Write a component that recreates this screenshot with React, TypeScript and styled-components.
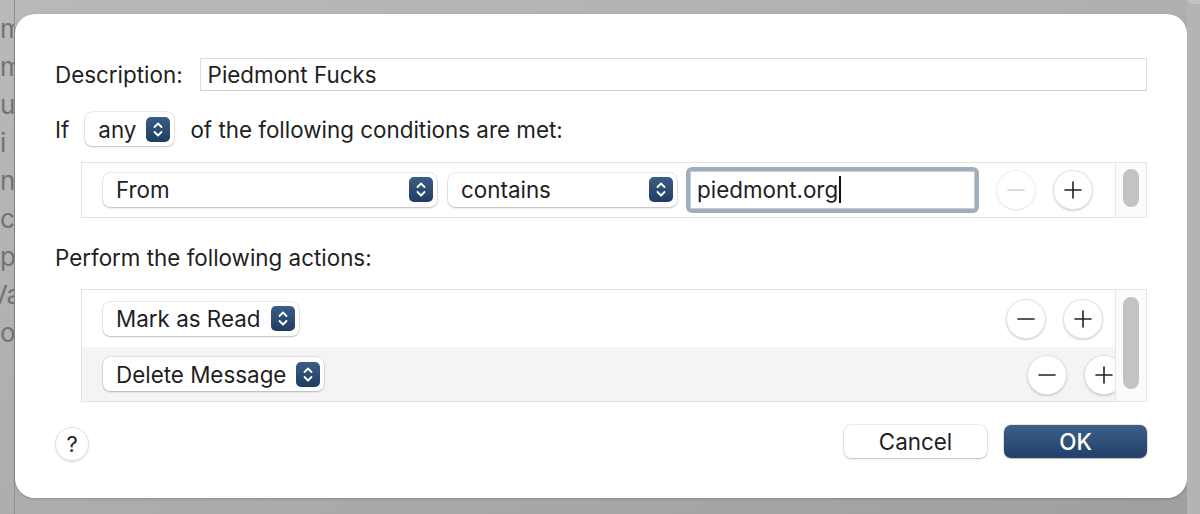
import React from 'react'
import styled, { createGlobalStyle } from 'styled-components'

const GlobalStyle = createGlobalStyle`
  html, body {
    margin: 0;
    padding: 0;
    overflow: hidden;
  }
  body {
    font-family: Inter, "Noto Sans", "Liberation Sans", sans-serif;
    color: #1f1f1f;
  }
`

const FONT = '22.4px'

const Screen = styled.div`
  display: flex;
  height: 514px;
  width: 1200px;
  background: linear-gradient(160deg, #b9b9b9 0%, #adadad 55%, #9f9f9f 100%);
  overflow: hidden;
`

const BackList = styled.div`
  width: 14px;
  flex: none;
  overflow: hidden;
  padding-top: 14px;
  display: flex;
  flex-direction: column;
  border-right: 1px solid #8f8f8f;
`

const BackWord = styled.span<{ $shift?: number }>`
  display: block;
  height: 38px;
  line-height: 30px;
  font-size: 26px;
  color: #737373;
  white-space: nowrap;
  margin-left: ${p => p.$shift ?? 0}px;
`

const Sheet = styled.div`
  margin-top: 14px;
  width: 1172px;
  height: 484px;
  flex: none;
  box-sizing: border-box;
  background: #ffffff;
  border-radius: 20px;
  box-shadow: 0 1px 3px rgba(0, 0, 0, 0.18);
  padding: 44px 40px 40px 40px;
  display: flex;
  flex-direction: column;
`

const RightStrip = styled.div`
  flex: 1;
  background: #b4b4b4;
  display: flex;
  justify-content: flex-end;
`

const CornerTab = styled.div`
  width: 34px;
  height: 6px;
  margin-top: -2px;
  border-radius: 0 0 0 14px;
  background: #c4c4c4;
`

const Row = styled.div<{ $top?: number }>`
  display: flex;
  align-items: center;
  margin-top: ${p => p.$top ?? 0}px;
`

const Label = styled.span<{ $gap?: number; $lead?: number }>`
  font-size: ${FONT};
  white-space: nowrap;
  margin-left: ${p => p.$lead ?? 0}px;
  margin-right: ${p => p.$gap ?? 0}px;
`

const TextField = styled.div`
  flex: 1;
  height: 33px;
  box-sizing: border-box;
  border: 1px solid #dddddd;
  border-bottom-color: #cfcfcf;
  display: flex;
  align-items: center;
  padding-left: 7px;
  font-size: ${FONT};
`

const Popup = styled.div<{ $width?: number; $lead?: number }>`
  display: flex;
  align-items: center;
  height: 34px;
  box-sizing: border-box;
  ${p => (p.$width ? `width: ${p.$width}px;` : '')}
  margin-left: ${p => p.$lead ?? 0}px;
  padding: 0 4px 0 13px;
  gap: 10px;
  background: #ffffff;
  border-radius: 7px;
  box-shadow: 0 0 0 0.5px rgba(0, 0, 0, 0.14), 0 1px 2px rgba(0, 0, 0, 0.2);
  font-size: ${FONT};
  flex: none;
`

const PopupText = styled.span`
  flex: 1;
  white-space: nowrap;
`

const StepperBox = styled.span`
  width: 24px;
  height: 25px;
  border-radius: 5px;
  background: linear-gradient(#3b5d86, #1f3d62);
  display: flex;
  align-items: center;
  justify-content: center;
  flex: none;
`

const Stepper = () => (
  <StepperBox>
    <svg width="12" height="17" viewBox="0 0 12 17">
      <path d="M2.5 6 L6 2.5 L9.5 6" fill="none" stroke="#fff" strokeWidth="1.8" strokeLinecap="round" strokeLinejoin="round" />
      <path d="M2.5 11 L6 14.5 L9.5 11" fill="none" stroke="#fff" strokeWidth="1.8" strokeLinecap="round" strokeLinejoin="round" />
    </svg>
  </StepperBox>
)

const ListBox = styled.div<{ $top: number }>`
  display: flex;
  margin: ${p => p.$top}px 0 0 26px;
  border: 1px solid #e3e3e3;
  overflow: hidden;
`

const Rows = styled.div`
  flex: 1;
  display: flex;
  flex-direction: column;
  overflow: hidden;
`

const RuleRow = styled.div<{ $height: number; $alt?: boolean }>`
  display: flex;
  align-items: center;
  height: ${p => p.$height}px;
  padding: 0 12px 0 21px;
  background: ${p => (p.$alt ? '#f4f4f4' : '#ffffff')};
`

const Spacer = styled.div`
  flex: 1;
`

const CircleGroup = styled.div<{ $shift?: number; $down?: number }>`
  display: flex;
  gap: 17px;
  margin-right: ${p => -(p.$shift ?? 0)}px;
  margin-top: ${p => p.$down ?? 0}px;
  flex: none;
`

const Circle = styled.div<{ $disabled?: boolean }>`
  width: 40px;
  height: 40px;
  border-radius: 50%;
  background: #ffffff;
  box-sizing: border-box;
  border: 1px solid ${p => (p.$disabled ? '#ededed' : '#e2e2e2')};
  box-shadow: ${p => (p.$disabled ? '0 1px 1px rgba(0,0,0,0.05)' : '0 1px 2px rgba(0,0,0,0.18)')};
  display: flex;
  align-items: center;
  justify-content: center;
  flex: none;
`

const Glyph = ({ plus, disabled }: { plus?: boolean; disabled?: boolean }) => (
  <svg width="20" height="20" viewBox="0 0 20 20">
    <path d="M2 10 H18" stroke={disabled ? '#d2d2d2' : '#222'} strokeWidth="1.6" strokeLinecap="round" />
    {plus && <path d="M10 2 V18" stroke="#222" strokeWidth="1.6" strokeLinecap="round" />}
  </svg>
)

const ScrollTrack = styled.div<{ $top: number; $bottom: number }>`
  width: 31px;
  flex: none;
  box-sizing: border-box;
  border-left: 1px solid #e6e6e6;
  background: #fbfbfb;
  padding: ${p => p.$top}px 7px ${p => p.$bottom}px 7px;
  display: flex;
`

const Thumb = styled.div`
  flex: 1;
  background: #c3c3c3;
  border-radius: 8px;
`

const FocusField = styled.div`
  width: 293px;
  height: 46px;
  box-sizing: border-box;
  border: 4px solid #9eaebf;
  border-radius: 6px;
  background: #ffffff;
  box-shadow: inset 0 0 0 1px #c4ccd4;
  display: flex;
  align-items: center;
  padding-left: 7px;
  font-size: ${FONT};
  margin-left: 9px;
  flex: none;
`

const Caret = styled.span`
  display: inline-block;
  width: 2px;
  height: 27px;
  background: #111;
  margin-left: 1px;
`

const Footer = styled.div`
  display: flex;
  align-items: center;
  margin-top: 23px;
  height: 33px;
`

const HelpButton = styled.div`
  width: 34px;
  height: 34px;
  border-radius: 50%;
  box-sizing: border-box;
  border: 1px solid #e0e0e0;
  box-shadow: 0 1px 2px rgba(0, 0, 0, 0.16);
  display: flex;
  align-items: center;
  justify-content: center;
  font-size: 22px;
  margin-top: 4px;
`

const PushButton = styled.div<{ $primary?: boolean }>`
  width: 143px;
  height: 33px;
  border-radius: 7px;
  display: flex;
  align-items: center;
  justify-content: center;
  font-size: ${FONT};
  font-weight: ${p => (p.$primary ? 500 : 400)};
  color: ${p => (p.$primary ? '#ffffff' : '#1f1f1f')};
  background: ${p => (p.$primary ? 'linear-gradient(#3d5e86, #22416a)' : '#ffffff')};
  box-shadow: ${p =>
    p.$primary
      ? '0 0 0 0.5px rgba(0,0,0,0.2), 0 1px 1.5px rgba(0,0,0,0.2)'
      : '0 0 0 0.5px rgba(0,0,0,0.14), 0 1px 2px rgba(0,0,0,0.2)'};
  & + & {
    margin-left: 17px;
  }
`

const backWords: [string, number][] = [
  ['m', 0], ['m', 0], ['u', 0], ['i', 0], ['n', 0], ['c', 0], ['p', 0], ['Va', -10], ['o', 0],
]

export default function App() {
  return (
    <>
      <GlobalStyle />
      <Screen>
        <BackList>
          {backWords.map(([w, s], i) => (
            <BackWord key={i} $shift={s}>{w}</BackWord>
          ))}
        </BackList>
        <Sheet>
          <Row>
            <Label $gap={17}>Description:</Label>
            <TextField>Piedmont Fucks</TextField>
          </Row>

          <Row $top={21}>
            <Label $gap={16}>If</Label>
            <Popup>
              <PopupText>any</PopupText>
              <Stepper />
            </Popup>
            <Label $lead={16}>of the following conditions are met:</Label>
          </Row>

          <ListBox $top={16}>
            <Rows>
              <RuleRow $height={54}>
                <Popup $width={334}>
                  <PopupText>From</PopupText>
                  <Stepper />
                </Popup>
                <Popup $width={229} $lead={11}>
                  <PopupText>contains</PopupText>
                  <Stepper />
                </Popup>
                <FocusField>
                  piedmont.org<Caret />
                </FocusField>
                <Spacer />
                <CircleGroup $shift={-10}>
                  <Circle $disabled><Glyph disabled /></Circle>
                  <Circle><Glyph plus /></Circle>
                </CircleGroup>
              </RuleRow>
            </Rows>
            <ScrollTrack $top={6} $bottom={10}>
              <Thumb />
            </ScrollTrack>
          </ListBox>

          <Row $top={26}>
            <Label>Perform the following actions:</Label>
          </Row>

          <ListBox $top={18}>
            <Rows>
              <RuleRow $height={58}>
                <Popup>
                  <PopupText>Mark as Read</PopupText>
                  <Stepper />
                </Popup>
                <Spacer />
                <CircleGroup>
                  <Circle><Glyph /></Circle>
                  <Circle><Glyph plus /></Circle>
                </CircleGroup>
              </RuleRow>
              <RuleRow $height={54} $alt>
                <Popup>
                  <PopupText>Delete Message</PopupText>
                  <Stepper />
                </Popup>
                <Spacer />
                <CircleGroup $shift={21} $down={2}>
                  <Circle><Glyph /></Circle>
                  <Circle><Glyph plus /></Circle>
                </CircleGroup>
              </RuleRow>
            </Rows>
            <ScrollTrack $top={7} $bottom={12}>
              <Thumb />
            </ScrollTrack>
          </ListBox>

          <Footer>
            <HelpButton>?</HelpButton>
            <Spacer />
            <PushButton>Cancel</PushButton>
            <PushButton $primary>OK</PushButton>
          </Footer>
        </Sheet>
        <RightStrip>
          <CornerTab />
        </RightStrip>
      </Screen>
    </>
  )
}
